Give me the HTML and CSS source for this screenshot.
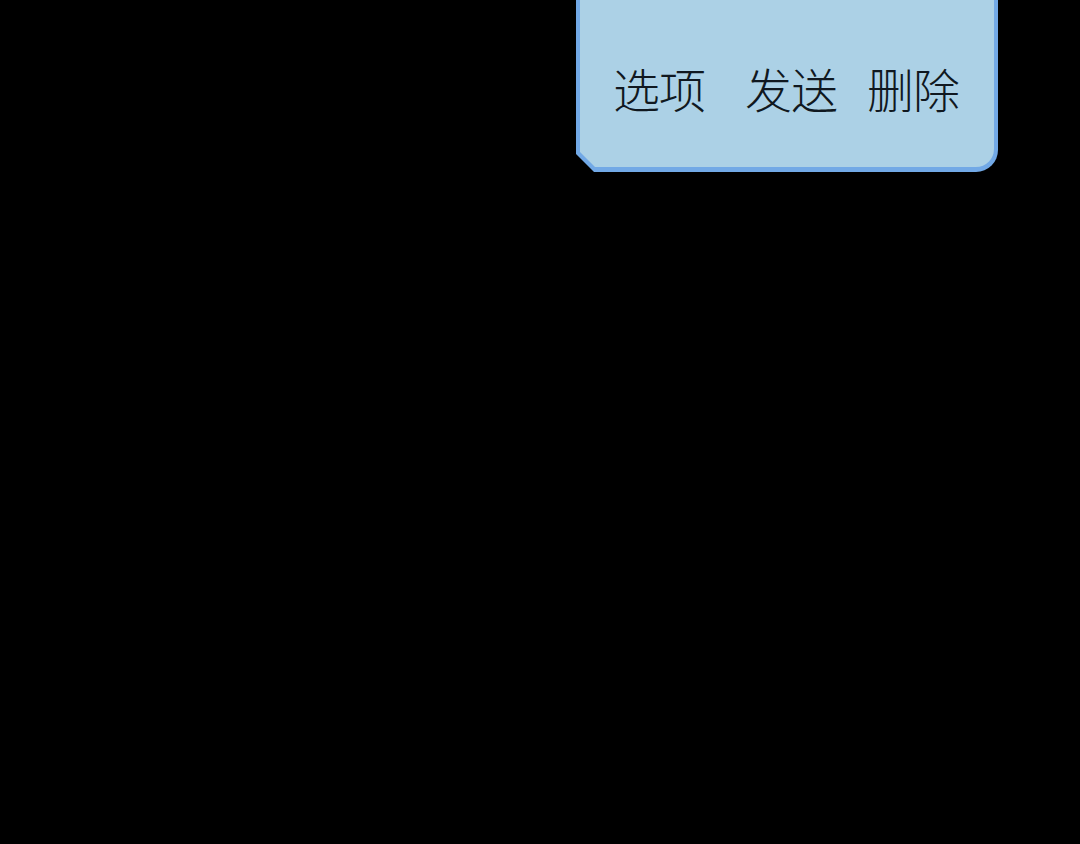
FILE: index.html
```html
<!DOCTYPE html>
<html lang="zh">
<head>
<meta charset="utf-8">
<title>菜单</title>
<link rel="stylesheet" href="styles.css">
</head>
<body>
<div class="stage">
  <div class="panel">
    <div class="panel-inner">
      <div class="menu">
        <span class="item item-options">选项</span>
        <span class="item item-send">发送</span>
        <span class="item item-delete">删除</span>
      </div>
    </div>
  </div>
</div>
</body>
</html>
```

FILE: styles.css
```css
html, body {
  margin: 0;
  padding: 0;
  background: #000;
}
.stage {
  width: 1080px;
  height: 844px;
  background: #000;
  padding-left: 576px;
  box-sizing: border-box;
}
.panel {
  width: 422px;
  height: 172px;
  background: #72a9e6;
  padding: 0 4px 5px 4px;
  box-sizing: border-box;
  border-bottom-right-radius: 22px;
  clip-path: polygon(0 0, 100% 0, 100% 100%, 18px 100%, 0 calc(100% - 18px));
}
.panel-inner {
  height: 100%;
  background: #acd1e6;
  border-bottom-right-radius: 18px;
  clip-path: polygon(0 0, 100% 0, 100% 100%, 15px 100%, 0 calc(100% - 15px));
}
.menu {
  display: flex;
  align-items: center;
  padding-top: 59px;
  padding-left: 33px;
  font-family: "Noto Sans CJK SC", "Noto Sans", sans-serif;
  font-weight: 200;
  font-size: 47px;
  line-height: 58px;
  color: #101820;
}
.item {
  display: block;
  letter-spacing: -1px;
}
.item-send {
  margin-left: 40px;
}
.item-delete {
  margin-left: 30px;
}
```
